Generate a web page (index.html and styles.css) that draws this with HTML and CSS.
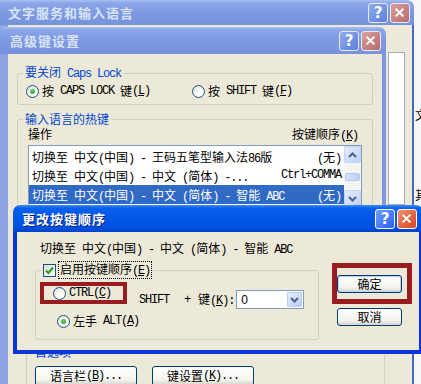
FILE: index.html
```html
<!DOCTYPE html>
<html lang="zh-CN">
<head>
  <meta charset="UTF-8" />
  <meta name="viewport" content="width=device-width, initial-scale=1.0" />
  <title>更改按键顺序</title>
  <link rel="stylesheet" href="styles.css">
</head>
<body>
  <div class="desk">

    <!-- 文字服务和输入语言 (behind) -->
    <div class="win back">
      <div class="title off">
        <span class="caption">文字服务和输入语言</span>
        <div class="tbtns">
          <span class="tb help">?</span>
          <span class="tb x"><svg width="20" height="20" viewBox="0 0 20 20"><path d="M6 6L13 13M13 6L6 13" stroke="#fff" stroke-width="2.2" stroke-linecap="square"/></svg></span>
        </div>
      </div>
      <div class="pane">
        <div class="tree"></div>
        <fieldset class="group prefs">
          <legend>首选项</legend>
          <div class="gbody">
            <span class="btn wide">语言栏<span class="en">(<u>B</u>)...</span></span>
            <span class="btn wide">键设置<span class="en">(<u>K</u>)...</span></span>
          </div>
        </fieldset>
      </div>
    </div>

    <div class="far">
      <span>文</span>
      <span class="lower">其</span>
    </div>

    <!-- 高级键设置 -->
    <div class="win mid">
      <div class="title off">
        <span class="caption">高级键设置</span>
        <div class="tbtns">
          <span class="tb help">?</span>
          <span class="tb x"><svg width="20" height="20" viewBox="0 0 20 20"><path d="M6 6L13 13M13 6L6 13" stroke="#fff" stroke-width="2.2" stroke-linecap="square"/></svg></span>
        </div>
      </div>
      <div class="pane">
        <fieldset class="group caps">
          <legend>要关闭<span class="en"> Caps Lock</span></legend>
          <div class="gbody">
            <label class="opt first"><i class="radio on"></i>按<span class="en"> CAPS LOCK </span>键<span class="en">(<u>L</u>)</span></label>
            <label class="opt"><i class="radio"></i>按<span class="en"> SHIFT </span>键<span class="en">(<u>F</u>)</span></label>
          </div>
        </fieldset>

        <fieldset class="group hotkeys">
          <legend>输入语言的热键</legend>
          <div class="gbody">
            <div class="head">
              <span>操作</span>
              <span>按键顺序<span class="en">(<u>K</u>)</span></span>
            </div>
            <div class="list">
              <div class="rows">
                <div class="row">
                  <span>切换至<span class="en"> </span>中文<span class="en">(</span>中国<span class="en">) - </span>王码五笔型输入法<span class="en">86</span>版</span>
                  <span><span class="en">(</span>无<span class="en">)</span></span>
                </div>
                <div class="row">
                  <span>切换至<span class="en"> </span>中文<span class="en">(</span>中国<span class="en">) - </span>中文<span class="en"> (</span>简体<span class="en">) -...</span></span>
                  <span class="en">Ctrl+COMMA</span>
                </div>
                <div class="row sel">
                  <span>切换至<span class="en"> </span>中文<span class="en">(</span>中国<span class="en">) - </span>中文<span class="en"> (</span>简体<span class="en">) - </span>智能<span class="en"> ABC</span></span>
                  <span><span class="en">(</span>无<span class="en">)</span></span>
                </div>
              </div>
              <div class="sbar">
                <i class="sb"><svg width="9" height="6" viewBox="0 0 9 6"><path d="M1 5L4.5 1.5L8 5" fill="none" stroke="#4d6185" stroke-width="2"/></svg></i>
                <i class="track"><i class="thumb"></i></i>
                <i class="sb"><svg width="9" height="6" viewBox="0 0 9 6"><path d="M1 1L4.5 4.5L8 1" fill="none" stroke="#4d6185" stroke-width="2"/></svg></i>
              </div>
            </div>
          </div>
        </fieldset>
      </div>
    </div>

    <!-- 更改按键顺序 (active) -->
    <div class="win front">
      <div class="title on">
        <span class="caption">更改按键顺序</span>
        <div class="tbtns">
          <span class="tb help">?</span>
          <span class="tb x"><svg width="20" height="20" viewBox="0 0 20 20"><path d="M6 6L13 13M13 6L6 13" stroke="#fff" stroke-width="2.2" stroke-linecap="square"/></svg></span>
        </div>
      </div>
      <div class="pane">
        <div class="target">切换至<span class="en"> </span>中文<span class="en">(</span>中国<span class="en">) - </span>中文<span class="en"> (</span>简体<span class="en">) - </span>智能<span class="en"> ABC</span></div>

        <div class="keyrow">
          <fieldset class="group seq">
            <legend><span class="lg"><i class="check"><svg width="11" height="11" viewBox="0 0 11 11"><path d="M2 5.5L4.5 8L9 2.5" fill="none" stroke="#21a121" stroke-width="2"/></svg></i><span class="focus">启用按键顺序<span class="en">(<u>E</u>)</span></span></span></legend>
            <div class="gbody">
              <div class="seq-top">
                <div class="mark m1">
                  <label class="opt"><i class="radio"></i><span class="en">CTRL(<u>C</u>)</span></label>
                </div>
                <div class="keyline">
                  <span class="en">SHIFT</span>
                  <span class="en plus">+</span>
                  <span class="keylabel">键<span class="en">(<u>K</u>):</span></span>
                  <div class="combo">
                    <span class="val">0</span>
                    <i class="drop"><svg width="9" height="6" viewBox="0 0 9 6"><path d="M1 1L4.5 4.5L8 1" fill="none" stroke="#4d6185" stroke-width="2"/></svg></i>
                  </div>
                </div>
              </div>
              <label class="opt alt"><i class="radio on"></i>左手<span class="en"> ALT(<u>A</u>)</span></label>
            </div>
          </fieldset>

          <div class="actions">
            <div class="mark m2">
              <span class="btn default">确定</span>
            </div>
            <span class="btn cancel">取消</span>
          </div>
        </div>
      </div>
    </div>

  </div>
</body>
</html>
```

FILE: styles.css
```css
* {
  box-sizing: border-box;
}

body {
  margin: 0;
  font-family: "Noto Sans CJK SC", sans-serif;
  font-size: 12px;
  line-height: 16px;
  color: #000;
  background: #f5f5f3;
}

.desk {
  position: relative;
  width: 421px;
  height: 384px;
  overflow: hidden;
  background: #f5f5f3;
}

/* half-width latin, like SimSun */
.en {
  font-family: "Liberation Mono", monospace;
  font-size: 12px;
  letter-spacing: -1.2px;
  white-space: pre;
}

u {
  text-decoration: underline;
}

/* windows */
.win {
  position: absolute;
  display: flex;
  flex-direction: column;
}

.back {
  left: 0;
  top: 0;
  width: 414px;
  height: 400px;
}

.mid {
  left: 0;
  top: 27px;
  width: 386px;
  height: 320px;
}

.front {
  left: 13px;
  top: 205px;
  width: 410px;
  height: 149px;
}

.title {
  flex: none;
  display: flex;
  align-items: center;
  justify-content: space-between;
  border-radius: 7px 7px 0 0;
}

.title.off {
  background: linear-gradient(#aabff2, #8ba5e8 3px, #7c98e0 55%, #7893dd);
  color: #d8e4f8;
}

.title.on {
  background: linear-gradient(#3d8ef9, #0b60ec 3px, #0056e6 50%, #0051df 85%, #0040c6);
  color: #fff;
  text-shadow: 1px 1px 0 #0a1e80;
}

.back .title {
  height: 25px;
  padding: 0 4px 0 8px;
  border-radius: 0 7px 0 0;
}

.mid .title {
  height: 27px;
  padding: 0 5px 0 10px;
  border-radius: 5px 7px 0 0;
}

.front .title {
  height: 27px;
  padding: 0 6px 0 9px;
}

.caption {
  font-weight: bold;
  font-size: 13px;
  letter-spacing: 1px;
}

.tbtns {
  display: flex;
  gap: 2px;
}

.tb {
  width: 20px;
  height: 20px;
  border: 1px solid #fff;
  border-radius: 3px;
  display: flex;
  align-items: center;
  justify-content: center;
  text-shadow: none;
}

.tb.help {
  font: bold 15px "DejaVu Sans", sans-serif;
  color: #fff;
}

.off .tb {
  border-color: #e4ebfb;
}

.off .tb.help {
  background: linear-gradient(135deg, #8fabef, #5d80db);
}

.off .tb.x {
  background: linear-gradient(135deg, #d9a09c, #b86a6c);
}

.on .tb.help {
  background: linear-gradient(135deg, #6e9eff, #2b60e6);
}

.on .tb.x {
  background: linear-gradient(135deg, #f39272, #d5441f);
}

.pane {
  flex: 1;
  background: #ece9d8;
}

.back .pane {
  border-left: 8px solid #8ea2e4;
  border-right: 2px solid #4a66c4;
  padding: 27px 7px 0 18px;
}

.mid .pane {
  border-left: 8px solid #8ea2e4;
  border-right: 4px solid #7f95df;
  padding: 11px 9px 0 9px;
}

.front .pane {
  border: 4px solid #0a36d6;
  border-top: 0;
  padding-top: 8px;
}

.far {
  position: absolute;
  left: 415px;
  top: 0;
  width: 12px;
  height: 384px;
  padding-top: 108px;
  background: #f7f7f6;
  display: flex;
  flex-direction: column;
  line-height: 14px;
}

.far .lower {
  margin-top: 66px;
}

/* group boxes */
.group {
  margin: 0;
  padding: 0;
  border: 1px solid #d0d0bf;
  border-radius: 3px;
  min-width: 0;
}

.group legend {
  padding: 0 2px;
  margin-left: 5px;
  line-height: 14px;
  color: #0046d5;
}

.caps .gbody {
  display: flex;
  padding: 2px 0 5px 8px;
}

.hotkeys {
  margin-top: 7px;
}

.hotkeys .gbody {
  padding: 0 10px 40px 10px;
}

.head {
  display: flex;
  justify-content: space-between;
  padding-right: 4px;
}

.opt {
  display: flex;
  align-items: center;
  white-space: nowrap;
}

.opt.first {
  width: 166px;
}

.radio {
  flex: none;
  width: 13px;
  height: 13px;
  margin-right: 3px;
  border: 1px solid #1c5180;
  border-radius: 50%;
  background: radial-gradient(circle at 65% 70%, #fff 25%, #d8d8d2 100%);
  display: flex;
  align-items: center;
  justify-content: center;
}

.radio.on::after {
  content: "";
  width: 5px;
  height: 5px;
  border-radius: 50%;
  background: radial-gradient(circle at 40% 35%, #63d663, #1f9a1f);
}

.check {
  flex: none;
  width: 13px;
  height: 13px;
  margin-right: 3px;
  border: 1px solid #1c5180;
  background: linear-gradient(135deg, #dcdcd7, #fff);
  display: flex;
  align-items: center;
  justify-content: center;
}

/* list view */
.list {
  margin-top: 1px;
  height: 63px;
  display: flex;
  border: 1px solid #7f9db9;
  background: #fff;
}

.rows {
  flex: 1;
  padding-top: 1px;
}

.row {
  display: flex;
  justify-content: space-between;
  height: 19px;
  line-height: 19px;
  padding: 0 3px;
  white-space: nowrap;
}

.row.sel {
  background: #316ac5;
  color: #fff;
}

.sbar {
  width: 17px;
  display: flex;
  flex-direction: column;
  background: #f4f4f0;
}

.sb {
  height: 17px;
  border: 1px solid #c3d3fd;
  border-radius: 2px;
  background: linear-gradient(135deg, #e6eefd, #bcd0fa);
  display: flex;
  align-items: center;
  justify-content: center;
}

.track {
  flex: 1;
  display: flex;
  align-items: center;
  padding: 0 1px;
}

.thumb {
  width: 100%;
  height: 8px;
  border: 1px solid #b4c8f6;
  border-radius: 2px;
  background: linear-gradient(90deg, #d6e1fc, #bccffa);
}

/* front dialog */
.target {
  padding-left: 23px;
  white-space: nowrap;
}

.keyrow {
  display: flex;
  align-items: flex-start;
  margin-top: 4px;
  padding-left: 18px;
}

.seq {
  width: 284px;
  flex: none;
}

.seq legend {
  color: #000;
}

.lg {
  display: inline-flex;
  align-items: center;
}

.focus {
  outline: 1px dotted #000;
  padding: 0 1px;
}

.seq .gbody {
  padding: 4px 0 10px 4px;
}

.seq-top {
  display: flex;
  align-items: flex-start;
}

.mark {
  border: 4px solid #9b1c1f;
}

.m1 {
  line-height: 14px;
  padding: 0 12px 0 9px;
}

.keyline {
  display: flex;
  align-items: center;
  height: 19px;
  margin: 8px 0 0 12px;
  white-space: nowrap;
}

.plus {
  margin-left: 15px;
}

.keylabel {
  margin-left: 8px;
}

.combo {
  display: flex;
  align-items: center;
  justify-content: space-between;
  width: 68px;
  height: 19px;
  margin-left: 2px;
  border: 1px solid #7f9db9;
  background: #fff;
}

.val {
  padding-left: 4px;
  font-family: "Liberation Sans", sans-serif;
}

.drop {
  width: 15px;
  height: 15px;
  margin-right: 1px;
  border: 1px solid #b9cdf7;
  border-radius: 1px;
  background: linear-gradient(135deg, #e6eefd, #b8cdf9);
  display: flex;
  align-items: center;
  justify-content: center;
}

.alt {
  margin-top: 4px;
  padding-left: 17px;
}

.actions {
  display: flex;
  flex-direction: column;
  margin: 1px 0 0 13px;
}

.m2 {
  border-width: 5px;
  padding: 7px 5px 6px 0;
}

.btn {
  display: flex;
  align-items: center;
  justify-content: center;
  width: 65px;
  height: 18px;
  border: 1px solid #003c74;
  border-radius: 3px;
  background: linear-gradient(#fff, #f4f4ef 70%, #d8d2c6);
  white-space: nowrap;
}

.btn.default {
  box-shadow: inset 0 0 0 1px #bcd0f7;
}

.btn.cancel {
  margin: 4px 0 0 5px;
}

/* back window leftovers */
.tree {
  width: 17px;
  height: 153px;
  margin-left: auto;
  border: 1px solid #a5acb5;
  background: #fff;
}

.prefs {
  width: 359px;
  margin-top: 140px;
}

.prefs legend {
  margin-left: 6px;
}

.prefs .gbody {
  display: flex;
  gap: 15px;
  padding: 7px 0 0 8px;
}

.btn.wide {
  width: 102px;
  height: 20px;
}
```
